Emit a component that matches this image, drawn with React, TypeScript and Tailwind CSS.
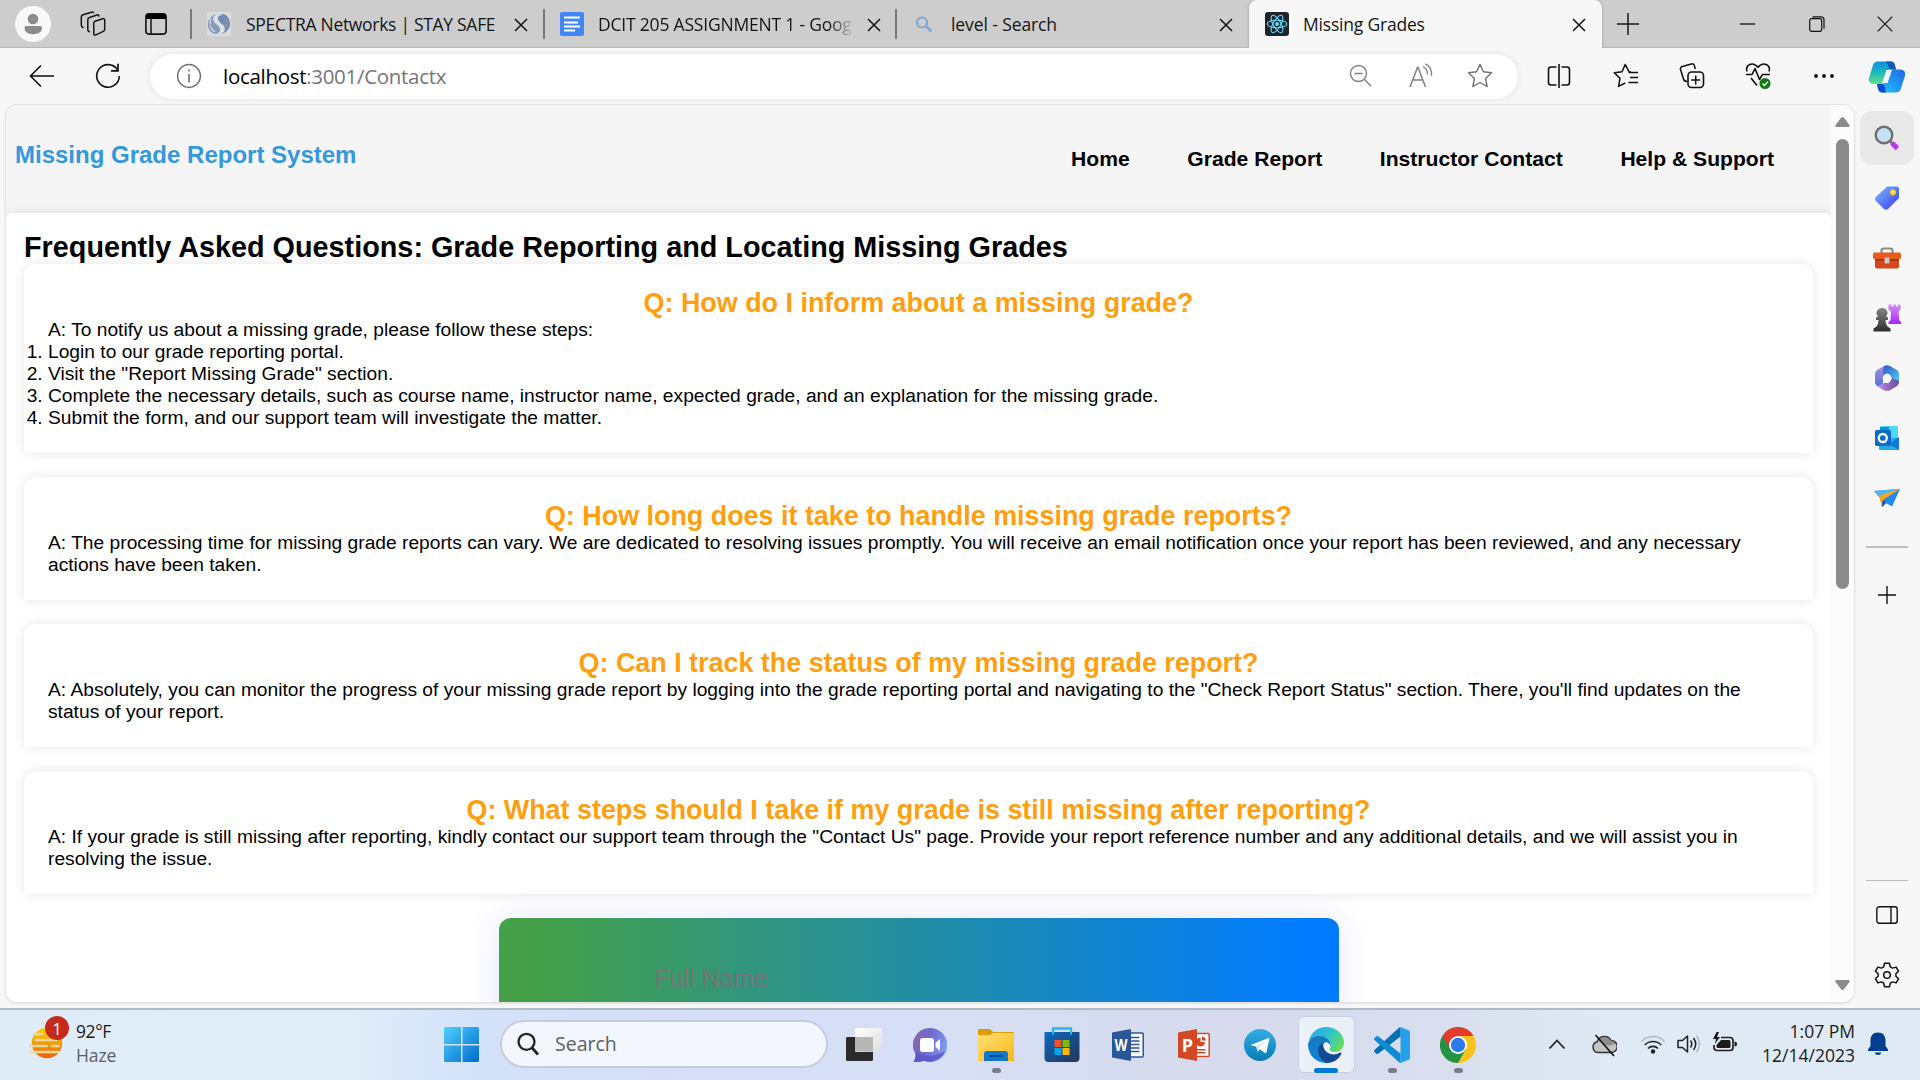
import React from "react";

type SvgProps = { w: number; h: number; className?: string; children: React.ReactNode };

function Svg({ w, h, className = "", children }: SvgProps) {
  return (
    <svg width={w} height={h} viewBox={`0 0 ${w} ${h}`} fill="none" className={`block shrink-0 ${className}`}>
      {children}
    </svg>
  );
}

const ui = "font-['Open_Sans','Noto_Sans',sans-serif]";

function TabClose() {
  return (
    <Svg w={14} h={14} className="mt-0.5">
      <path d="M1 1L13 13M13 1L1 13" stroke="#111" strokeWidth="1.5" />
    </Svg>
  );
}

function TabSeparator({ className }: { className: string }) {
  return <div className={`h-[30px] w-[2px] shrink-0 bg-[#7b7b7b] ${className}`} />;
}

function TabBar() {
  return (
    <div className="flex h-12 shrink-0 items-center bg-[#cdcdcd] text-[17.5px] text-[#151515] shadow-[inset_0_-1px_0_#b9b9b9]">
      <Svg w={36} h={36} className="ml-[15px]">
        <circle cx="18" cy="18" r="18" fill="#f8f8f8" />
        <circle cx="18" cy="13" r="5.3" fill="#8b8b8b" />
        <path d="M11 20h14q2 0 2 2c0 4-4 6.200-9 6.200S9.500 26 9.500 22q0-2 1.500-2z" fill="#8b8b8b" />
      </Svg>
      <Svg w={26} h={26} className="ml-[29px]">
        <g stroke="#161616" strokeWidth="1.500" strokeLinejoin="round" strokeLinecap="round">
          <path d="M14.500 10.500l8-2.800q2.200-.5 2.200 1.500v9q0 1.500-1.500 2.200l-7.200 3.500q-2.200.8-2.200-1.500V12.200q0-1.200.7-1.700z" />
          <path d="M19 5q-.5-1.500-2-1L9.500 6.500Q7.800 7 7.800 8.700v10q0 1.500 1.500 2" />
          <path d="M13.500 1.700Q13 .8 11.500 1.200L3 3.800Q1.300 4.300 1.300 6v8q0 1.800 1.700 2.500" />
        </g>
      </Svg>
      <Svg w={22} h={22} className="ml-[39px]">
        <rect x=".9" y=".9" width="20.200" height="20.200" rx="3" stroke="#111" strokeWidth="1.600" />
        <path d="M1 6V3.500Q1 1 3.500 1h15Q21 1 21 3.500V6z" fill="#000" />
        <path d="M6 6v15" stroke="#111" strokeWidth="1.500" />
      </Svg>
      <TabSeparator className="ml-[23px]" />
      <Svg w={24} h={24} className="ml-[15px]">
        <rect width="24" height="24" fill="#dcdcdc" />
        <path d="M15 2C8 1 5 5 6.500 9c1 3 6 4 6.500 8 .3 3-2 5-5 5C3 21 .8 16 1 12 1.200 6 6 1 15 2z" fill="#7f9dc0" />
        <path d="M9 22c7 1 10-3 8.500-7-1-3-6-4-6.500-8C10.700 4 13 2 16 2c5 1 7.200 6 7 10-.2 6-5 11-14 10z" fill="#6f8db2" />
        <path d="M15 3C10 2 7 5 9 8.500c1.500 2.500 7 4 6.500 9-.3 2-2 4-5 4.500M4 6c-2 5-1 11 4 14" stroke="#dce5ed" strokeWidth="1.100" />
        <path d="M19 8l2 2M18 13l3 1M4 12l1 3" stroke="#d9826f" strokeWidth="1.600" />
      </Svg>
      <span className="ml-[15px] w-[268px] whitespace-nowrap tracking-[-0.3px]">SPECTRA Networks | STAY SAFE</span>
      <TabClose />
      <TabSeparator className="ml-[15px]" />
      <Svg w={24} h={24} className="ml-[15px]">
        <rect width="24" height="24" rx="2" fill="#4285f4" />
        <path d="M4 5.500h16M4 10.500h14M4 14.500h16M4 18.500h11" stroke="#fff" strokeWidth="2.200" />
      </Svg>
      <span className="ml-[14px] w-[256px] overflow-hidden whitespace-nowrap tracking-[-0.2px] [mask-image:linear-gradient(90deg,#000_90%,transparent)]">
        DCIT 205 ASSIGNMENT 1 - Goog
      </span>
      <span className="ml-[13px]">
        <TabClose />
      </span>
      <TabSeparator className="ml-[14px]" />
      <Svg w={24} h={24} className="ml-[15px]">
        <circle cx="10" cy="10.500" r="5" stroke="#7fa9d2" strokeWidth="2.200" />
        <path d="M13.500 14l6 5.500" stroke="#7fa9d2" strokeWidth="2.600" />
      </Svg>
      <span className="ml-[15px] w-[268px] whitespace-nowrap tracking-[-0.1px]">level - Search</span>
      <TabClose />
      <div className="ml-4 flex h-12 w-[353px] shrink-0 items-center rounded-t-lg bg-[#f7f7f7] pl-4 shadow-[0_0_3px_rgba(0,0,0,0.25)] [clip-path:inset(-3px_-4px_0_-4px)]">
        <Svg w={24} h={24}>
          <rect width="24" height="24" rx="3" fill="#20232a" />
          <g stroke="#61dafb" strokeWidth="1.100">
            <ellipse cx="12" cy="12" rx="9.800" ry="3.800" />
            <ellipse cx="12" cy="12" rx="9.800" ry="3.800" transform="rotate(60 12 12)" />
            <ellipse cx="12" cy="12" rx="9.800" ry="3.800" transform="rotate(120 12 12)" />
          </g>
          <circle cx="12" cy="12" r="2" fill="#61dafb" />
        </Svg>
        <span className="ml-[14px] w-[269px] whitespace-nowrap tracking-[-0.2px]">Missing Grades</span>
        <TabClose />
      </div>
      <Svg w={22} h={22} className="ml-[15px]">
        <path d="M11 0v22M0 11h22" stroke="#1a1a1a" strokeWidth="1.500" />
      </Svg>
      <Svg w={16} h={16} className="ml-[101px]">
        <path d="M0 8h15" stroke="#111" strokeWidth="1.300" />
      </Svg>
      <Svg w={16} h={16} className="ml-[53px]">
        <rect x=".7" y="2.700" width="12" height="12.600" rx="2" stroke="#111" strokeWidth="1.200" />
        <path d="M3.500.8H12q3 0 3 3v9" stroke="#111" strokeWidth="1.200" />
      </Svg>
      <Svg w={16} h={16} className="ml-[52px]">
        <path d="M.7.7l14.600 14.600M15.300.7L.7 15.300" stroke="#111" strokeWidth="1.200" />
      </Svg>
    </div>
  );
}

function Toolbar() {
  return (
    <div className="flex h-[56px] shrink-0 items-center bg-[#f7f7f7]">
      <Svg w={26} h={24} className="ml-[29px]">
        <path d="M1.500 12H25M12 1.500L1.500 12 12 22.500" stroke="#111" strokeWidth="1.600" />
      </Svg>
      <Svg w={26} h={26} className="ml-10">
        <path d="M22.300 6.500A11.300 11.300 0 1 0 24.300 13" stroke="#111" strokeWidth="1.600" />
        <path d="M23 .8V7.800h-7" stroke="#111" strokeWidth="1.700" />
      </Svg>
      <div className="ml-[29px] flex h-[45px] w-[1368px] shrink-0 items-center rounded-full bg-white shadow-[0_0_6px_rgba(0,0,0,0.09)]">
        <Svg w={26} h={26} className="ml-[26px]">
          <circle cx="13" cy="13" r="11.400" stroke="#707070" strokeWidth="1.500" />
          <path d="M13 11v8.500M13 6.500v2" stroke="#707070" strokeWidth="1.600" />
        </Svg>
        <span className="ml-[21px] w-[1126px] whitespace-nowrap text-[20.500px] tracking-[-0.3px] text-[#767676]">
          <span className="text-black">localhost</span>:3001/Contactx
        </span>
        <Svg w={24} h={24}>
          <g stroke="#808080" strokeWidth="1.400">
            <circle cx="9.500" cy="9.500" r="8" />
            <path d="M15.200 15.200l7 7M5.500 9.500h8" />
          </g>
        </Svg>
        <Svg w={28} h={26} className="ml-[36px]">
          <path d="M1 24L8.500 4.500h.6L16.500 24M3.800 17h10" stroke="#808080" strokeWidth="1.500" />
          <path d="M14 3.500c3 1.500 4.500 4.500 4.500 8M16.500.8c4 2 6.500 6.500 6 12" stroke="#808080" strokeWidth="1.300" />
        </Svg>
        <Svg w={26} h={26} className="ml-[30px]">
          <path d="M13 1.500l3.500 7.300 8 1-5.900 5.600 1.500 8.100-7.100-4-7.100 4 1.500-8.100L1.500 9.800l8-1z" stroke="#707070" strokeWidth="1.400" strokeLinejoin="round" />
        </Svg>
      </div>
      <Svg w={24} h={24} className="ml-[29px]">
        <path d="M9.500 3H4Q1.500 3 1.500 5.500v13Q1.500 21 4 21h5.500M14.500 3H20q2.500 0 2.500 2.500v13Q22.500 21 20 21h-5.500M12 0v24" stroke="#111" strokeWidth="1.600" />
      </Svg>
      <Svg w={26} h={26} className="ml-[42px]">
        <path d="M18 9l-2-.3L12.200 1.500 9 8.800l-7.700 1 5.700 5.600-1.500 8 6.700-3.400M15.500 9.500H25M17 14.500h8M15.500 19.500H25" stroke="#111" strokeWidth="1.500" strokeLinejoin="round" />
      </Svg>
      <Svg w={26} h={26} className="ml-[40px]">
        <rect x="9" y="9" width="15.500" height="15.500" rx="3.500" stroke="#111" strokeWidth="1.600" />
        <path d="M16.700 12.500v9M12.200 17h9M8 18.500q-3-.2-3.500-2.500L1.500 6.500Q1 4.200 3.300 3.500l9-2.500q2.500-.7 3.200 2l.8 3" stroke="#111" strokeWidth="1.500" />
      </Svg>
      <Svg w={28} h={28} className="ml-[40px]">
        <path d="M2 9.500C.5 5 3.500 2 7.300 2c2.500 0 4.200 1.500 5.700 3.300C14.500 3.500 16.200 2 18.700 2c3.800 0 6.800 3 5.300 7.500M6 16l6 7.500M1 12.500h6l3-6 4.500 11 3-5H25" stroke="#111" strokeWidth="1.600" strokeLinejoin="round" />
        <circle cx="20" cy="21.500" r="5.500" fill="#107c10" />
        <path d="M17.500 21.500l2 2 3.300-3.700" stroke="#fff" strokeWidth="1.500" />
      </Svg>
      <Svg w={22} h={6} className="ml-[40px]">
        <circle cx="3" cy="3" r="1.900" fill="#111" />
        <circle cx="11" cy="3" r="1.900" fill="#111" />
        <circle cx="19" cy="3" r="1.900" fill="#111" />
      </Svg>
      <Svg w={38} h={34} className="mt-[2px] ml-[33px]">
        <defs>
          <linearGradient id="cpA" x1="0" y1="0" x2="0" y2="1">
            <stop offset="0" stopColor="#0c8fe0" />
            <stop offset=".45" stopColor="#1ab7bf" />
            <stop offset="1" stopColor="#63e08a" />
          </linearGradient>
          <linearGradient id="cpB" x1="0" y1="1" x2="1" y2="0">
            <stop offset="0" stopColor="#20c8ff" />
            <stop offset="1" stopColor="#2168e0" />
          </linearGradient>
        </defs>
        <path d="M10 1.500h13q3 0 4 4l1 4h-7l-4 12q-1 2.500-4 2.500H6q-6 0-5-6L5 5q1-3.500 5-3.500z" fill="url(#cpA)" />
        <path d="M18 1.500h5q3 0 4 4l1 4h-5q-2 0-3-4z" fill="#1259b5" />
        <path d="M28 32.500H14q-3 0-4-4L9 24h6l5-12q1-2.500 4-2.500h8q6 0 5 6l-4 13q-1 4-5 4z" fill="url(#cpB)" />
        <path d="M18 32.500h-4q-3 0-4-4L9 24h5q2 0 3 4z" fill="#0f4cd0" />
        <path d="M18.500 10h5.500l-4.500 13H14z" fill="#f7f7f7" />
      </Svg>
    </div>
  );
}

const navItems = ["Home", "Grade Report", "Instructor Contact", "Help & Support"];

function SiteHeader() {
  return (
    <header className="flex h-[108px] shrink-0 justify-between pl-[9px] pr-[57px]">
      <div className="pt-9 text-2xl leading-7 font-bold text-[#3498db]">Missing Grade Report System</div>
      <nav className="flex gap-[57.6px] pt-[42px] text-[21.120px] leading-6 font-bold text-black">
        {navItems.map((item) => (
          <a key={item}>{item}</a>
        ))}
      </nav>
    </header>
  );
}

function FaqCard({ question, children }: { question: string; children: React.ReactNode }) {
  return (
    <section className="mb-6 rounded-t-xl bg-white p-6 text-[19.200px] leading-[22px] tracking-[0.008px] text-black shadow-[0_0_12px_rgba(0,0,0,0.1)]">
      <h3 className="text-center text-[26.880px] leading-[31px] font-bold text-[#ff9f0f]">{question}</h3>
      {children}
    </section>
  );
}

function Faq() {
  return (
    <main className="h-[1200px] shrink-0 rounded-t-md bg-white px-[18px] pt-[18px] shadow-[0_0_12px_rgba(0,0,0,0.1)]">
      <h2 className="text-[28.800px] leading-[33px] font-bold text-black">
        Frequently Asked Questions: Grade Reporting and Locating Missing Grades
      </h2>
      <FaqCard question="Q: How do I inform about a missing grade?">
        <p>A: To notify us about a missing grade, please follow these steps:</p>
        <ol className="list-decimal">
          <li>Login to our grade reporting portal.</li>
          <li>Visit the "Report Missing Grade" section.</li>
          <li>Complete the necessary details, such as course name, instructor name, expected grade, and an explanation for the missing grade.</li>
          <li>Submit the form, and our support team will investigate the matter.</li>
        </ol>
      </FaqCard>
      <FaqCard question="Q: How long does it take to handle missing grade reports?">
        <p>
          A: The processing time for missing grade reports can vary. We are dedicated to resolving issues promptly. You will receive an email
          notification once your report has been reviewed, and any necessary actions have been taken.
        </p>
      </FaqCard>
      <FaqCard question="Q: Can I track the status of my missing grade report?">
        <p>
          A: Absolutely, you can monitor the progress of your missing grade report by logging into the grade reporting portal and navigating to the
          "Check Report Status" section. There, you'll find updates on the status of your report.
        </p>
      </FaqCard>
      <FaqCard question="Q: What steps should I take if my grade is still missing after reporting?">
        <p>
          A: If your grade is still missing after reporting, kindly contact our support team through the "Contact Us" page. Provide your report
          reference number and any additional details, and we will assist you in resolving the issue.
        </p>
      </FaqCard>
      <form className="mx-auto h-[600px] w-[840px] rounded-xl bg-[linear-gradient(90deg,#45a049_4%,#007bff_96%)] pt-[46px] pl-[156px] text-[24.960px] leading-[29px] text-[#757575] shadow-[0_0_36px_rgba(0,0,255,0.1)]">
        Full Name
      </form>
    </main>
  );
}

function Scrollbar() {
  return (
    <div className="flex w-[23px] shrink-0 flex-col items-center bg-[#fcfcfc] pt-3 pb-3">
      <Svg w={15} h={10}>
        <path d="M7.500 0q1 0 1.600 1L14.500 8q.6 2-1 2h-12q-1.600 0-1-2L5.900 1q.6-1 1.600-1z" fill="#8b8b8b" />
      </Svg>
      <div className="mt-3 h-[450px] w-[13px] rounded-full bg-[#8b8b8b]" />
      <Svg w={15} h={10} className="mt-auto">
        <path d="M7.500 10q1 0 1.600-1L14.500 2q.6-2-1-2h-12q-1.600 0-1 2l5.400 7q.6 1 1.600 1z" fill="#8b8b8b" />
      </Svg>
    </div>
  );
}

function Slot({ children }: { children: React.ReactNode }) {
  return <div className="flex h-[60px] w-full shrink-0 items-center justify-center">{children}</div>;
}

function EdgeSidebar() {
  return (
    <aside className="flex w-[63px] shrink-0 flex-col items-center pt-[4px]">
      <Slot>
        <div className="flex size-[54px] items-center justify-center rounded-xl bg-[#e9e9e9]">
          <Svg w={26} h={26}>
            <circle cx="10" cy="10" r="8.300" fill="#c3e2f6" stroke="#6e6e6e" strokeWidth="2.400" />
            <path d="M15.500 15.500l3 3" stroke="#777" strokeWidth="3" />
            <path d="M18 18l5.500 5.500" stroke="#b93af5" strokeWidth="5" />
          </Svg>
        </div>
      </Slot>
      <Slot>
        <Svg w={24} h={24}>
          <defs>
            <linearGradient id="tag" x1="0" y1="0" x2="1" y2="1">
              <stop offset="0" stopColor="#7cc0ff" />
              <stop offset="1" stopColor="#3a35f2" />
            </linearGradient>
          </defs>
          <path d="M12 .5h9.500q2.500 0 2.500 2.500v9L13 23q-2 1.500-4 0L.8 15q-1.500-2 0-4z" fill="url(#tag)" />
          <circle cx="18" cy="6.300" r="2.200" stroke="#f7c81c" strokeWidth="1.800" fill="#fff6c5" />
        </Svg>
      </Slot>
      <Slot>
        <Svg w={28} h={22}>
          <path d="M8.500 7V3.500Q8.500 1.500 11 1.500h6q2.500 0 2.500 2V7" stroke="#8c8c8c" strokeWidth="2.200" />
          <path d="M2 10h24v9.500q0 2-2 2H4q-2 0-2-2z" fill="#d5461b" />
          <rect y="5.500" width="28" height="6.500" rx="1.500" fill="#e95a1c" />
          <path d="M2 12h24v1.500H2z" fill="#9d2c10" />
          <rect x="11.500" y="10.500" width="5" height="6" rx="1" fill="#c9c9c9" />
        </Svg>
      </Slot>
      <Slot>
        <Svg w={28} h={28}>
          <defs>
            <linearGradient id="rook" x1="0" y1="0" x2="0" y2="1">
              <stop stopColor="#d98bfa" />
              <stop offset="1" stopColor="#a229f5" />
            </linearGradient>
            <linearGradient id="pawn" x1="0" y1="0" x2="0" y2="1">
              <stop stopColor="#858585" />
              <stop offset="1" stopColor="#2d2d2d" />
            </linearGradient>
          </defs>
          <path d="M15.500.5h3v2h2v-2h2.500v2h2v-2h2.500v5l-2 2 .7 8.500 1.800 2v2H15.500v-2l2-2 .5-8.500-2.500-2z" fill="url(#rook)" />
          <path d="M9 4a5 5 0 0 1 4 8.500l2 1v2.500h-2.500q0 4 2 6.500l3 2v3H.5v-3l3-2q2-2.500 2-6.500H3v-2.500l2-1A5 5 0 0 1 9 4z" fill="url(#pawn)" />
        </Svg>
      </Slot>
      <Slot>
        <Svg w={24} h={26}>
          <defs>
            <linearGradient id="m1" x1="0" y1="0" x2="0" y2="1">
              <stop stopColor="#b18be8" />
              <stop offset="1" stopColor="#4a78d8" />
            </linearGradient>
            <linearGradient id="m2" x1="0" y1="0" x2="1" y2="1">
              <stop stopColor="#2a5fc4" />
              <stop offset="1" stopColor="#4fd0f5" />
            </linearGradient>
            <linearGradient id="m3" x1="0" y1="0" x2="1" y2="0">
              <stop stopColor="#c08be6" />
              <stop offset="1" stopColor="#6c4a9c" />
            </linearGradient>
          </defs>
          <path d="M9 1L2 5Q0 6.500 0 9v8q0 2.500 2 4l1 .5 5-3V6q0-3 1-5z" fill="url(#m1)" />
          <path d="M9 1q3-1.500 6 0l7 4q2 1.500 2 4v9l-8-5.500-4-4-4 3V6q0-3 1-5z" fill="url(#m2)" />
          <path d="M24 16v1q0 2.500-2 4l-7 4.200q-3 1.300-6 0L2 21q5-1 7-3h5l3-5z" fill="url(#m3)" />
          <circle cx="12" cy="13" r="4.300" fill="#f7f7f7" />
        </Svg>
      </Slot>
      <Slot>
        <Svg w={24} h={24}>
          <rect x="5" y="0" width="18" height="15" rx="1" fill="#50d9ff" />
          <path d="M5 1h9v8H5z" fill="#1490df" />
          <path d="M4 12h20v11q0 1-1 1H5q-1 0-1-1z" fill="#28a8ea" />
          <path d="M24 11v13l-10-6z" fill="#0f78d4" />
          <rect y="4" width="16" height="16" rx="1.500" fill="#0a6cc6" />
          <circle cx="7.800" cy="12" r="4" stroke="#fff" strokeWidth="2.300" />
        </Svg>
      </Slot>
      <Slot>
        <Svg w={26} h={20}>
          <path d="M0 3L26 1l-8 17.500-6-3.500L8 19 6 10z" fill="#2389ec" />
          <path d="M0 3L26 .8 6 9z" fill="#51b5f5" />
          <path d="M5 7.500L26 1 9 12l-1 7z" fill="#f3a51c" />
          <path d="M9 12l3 3-4 4z" fill="#174f9f" />
        </Svg>
      </Slot>
      <div className="mt-[18px] h-[2px] w-[42px] bg-[#bfbfbf]" />
      <Svg w={18} h={18} className="mt-[38px]">
        <path d="M9 0v18M0 9h18" stroke="#111" strokeWidth="1.400" />
      </Svg>
      <div className="mt-auto h-px w-[42px] bg-[#bcbcbc]" />
      <Svg w={22} h={18} className="mt-[25px]">
        <rect x=".8" y=".8" width="20.400" height="16.400" rx="2.500" stroke="#111" strokeWidth="1.400" />
        <path d="M15 1v16" stroke="#111" strokeWidth="1.400" />
      </Svg>
      <Svg w={26} h={26} className="mt-[38px] mb-5">
        <path
          d="M10.600 1.200h4.800l.9 3.600 2.300 1.300 3.500-1 2.400 4.100-2.600 2.600v2.400l2.600 2.600-2.400 4.100-3.500-1-2.300 1.300-.9 3.600h-4.800l-.9-3.600-2.300-1.300-3.500 1-2.400-4.100 2.600-2.600v-2.400L1.500 9.200l2.400-4.100 3.500 1 2.300-1.300z"
          stroke="#111"
          strokeWidth="1.500"
          strokeLinejoin="round"
        />
        <circle cx="13" cy="13" r="3.300" stroke="#111" strokeWidth="1.500" />
      </Svg>
    </aside>
  );
}

function AppSlot({ mark = "none", children }: { mark?: "none" | "dot" | "active"; children: React.ReactNode }) {
  return (
    <div className="flex h-full w-[66px] shrink-0 justify-center pt-[6px]">
      <div
        className={
          mark === "active"
            ? "relative flex h-[57px] w-[57px] items-center justify-center rounded-md border border-[#c9cfdf] bg-[#ebeff8]"
            : "relative flex h-[57px] w-[57px] items-center justify-center"
        }
      >
        {children}
        {mark === "dot" && <div className="absolute bottom-0 h-[5px] w-[9px] rounded-full bg-[#7b7e87]" />}
        {mark === "active" && <div className="absolute -bottom-px h-[5px] w-6 rounded-full bg-[#0078d4]" />}
      </div>
    </div>
  );
}

function TaskbarApps() {
  return (
    <>
      <AppSlot>
        <Svg w={36} h={36}>
          <defs>
            <linearGradient id="tvw" x1="0" y1="0" x2="1" y2="1">
              <stop stopColor="#fff" />
              <stop offset="1" stopColor="#dedede" />
            </linearGradient>
          </defs>
          <rect x="0" y="10" width="27" height="24" rx="1.500" fill="#2b2b2b" />
          <rect x="9" y="1" width="27" height="24" rx="1.500" fill="url(#tvw)" />
          <path d="M9 10h18v14.500H9z" fill="#b7b7b7" />
        </Svg>
      </AppSlot>
      <AppSlot>
        <Svg w={34} h={34}>
          <defs>
            <linearGradient id="chat" x1="0" y1=".1" x2="1" y2=".4">
              <stop stopColor="#8c66b0" />
              <stop offset=".5" stopColor="#6d6acb" />
              <stop offset="1" stopColor="#7f9af0" />
            </linearGradient>
          </defs>
          <path d="M17 0a17 17 0 1 1-6 32.800Q6 34.500.5 34q2.500-4 2-8A17 17 0 0 1 17 0z" fill="url(#chat)" />
          <path d="M3 24q14 8 29-1a17 17 0 0 1-21 9.800Q6 34.500.5 34q2.500-4 2.500-10z" fill="#5a54c8" opacity=".8" />
          <rect x="7" y="10" width="14" height="14" rx="2.500" fill="#fff" />
          <path d="M22.500 15l4.500-4v12l-4.500-4z" fill="#fff" />
        </Svg>
      </AppSlot>
      <AppSlot mark="dot">
        <Svg w={36} h={34}>
          <defs>
            <linearGradient id="fold" x1="0" y1="0" x2="1" y2="1">
              <stop stopColor="#ffe07a" />
              <stop offset="1" stopColor="#fbb816" />
            </linearGradient>
          </defs>
          <path d="M0 2q0-1 1-1h11l3 3h20q1 0 1 1v6H0z" fill="#dd9b05" />
          <path d="M0 7h12l3-2h21v28H0z" fill="url(#fold)" />
          <path d="M6 33v-7q0-3 3-3h18q3 0 3 3v7z" fill="#0f78ca" />
          <path d="M11.500 28h13" stroke="#084f96" strokeWidth="2" />
        </Svg>
      </AppSlot>
      <AppSlot>
        <Svg w={36} h={36}>
          <defs>
            <linearGradient id="store" x1="0" y1="0" x2="1" y2="1">
              <stop stopColor="#0a6ac4" />
              <stop offset="1" stopColor="#253457" />
            </linearGradient>
          </defs>
          <path d="M9 8V1.500h18V8" stroke="#22b9ef" strokeWidth="2.200" />
          <path d="M.5 5h35v26q0 4-4 4h-27q-4 0-4-4z" fill="url(#store)" />
          <path d="M9 7.500V1.500h18v6" stroke="#22b9ef" strokeWidth="2" />
          <path d="M10.500 13h7v7h-7z" fill="#f25022" />
          <path d="M18.500 13h7v7h-7z" fill="#7fba00" />
          <path d="M10.500 21h7v7h-7z" fill="#00a4ef" />
          <path d="M18.500 21h7v7h-7z" fill="#ffb900" />
        </Svg>
      </AppSlot>
      <AppSlot>
        <Svg w={32} h={32}>
          <rect x="15" y="4" width="16.200" height="24" rx="1" fill="#fff" stroke="#2b579a" strokeWidth="1.500" />
          <path d="M18 8.500h9.500M18 12h9.500M18 15.500h9.500M18 19h9.500M18 22.500h9.500" stroke="#2b579a" strokeWidth="1.400" />
          <path d="M0 3.500L19 0v32L0 28.500z" fill="#2b579a" />
          <text x="9" y="22" textAnchor="middle" fontSize="15.500" fontWeight="700" fill="#fff" fontFamily="Open Sans" textLength="13" lengthAdjust="spacingAndGlyphs">
            W
          </text>
        </Svg>
      </AppSlot>
      <AppSlot>
        <Svg w={32} h={32}>
          <rect x="15" y="4.500" width="16.200" height="23" rx="1" fill="#fff" stroke="#d24726" strokeWidth="1.500" />
          <path d="M22.500 8.500v4.500h4.500a4.500 4.500 0 1 1-4.500-4.500z" fill="#d24726" />
          <path d="M24 7.500a4.500 4.500 0 0 1 4 4h-4zM19 20h8.500v1.500H19zM19 23h8.500v1.500H19z" fill="#d24726" />
          <path d="M0 3.500L19 0v32L0 28.500z" fill="#d24726" />
          <text x="9.500" y="22.500" textAnchor="middle" fontSize="18" fontWeight="700" fill="#fff" fontFamily="Open Sans">
            P
          </text>
        </Svg>
      </AppSlot>
      <AppSlot>
        <Svg w={32} h={32}>
          <defs>
            <linearGradient id="tg" x1="0" y1="0" x2="0" y2="1">
              <stop stopColor="#33aee3" />
              <stop offset="1" stopColor="#087cb8" />
            </linearGradient>
          </defs>
          <circle cx="16" cy="16" r="16" fill="url(#tg)" />
          <path d="M6.500 16L24.500 9q1-.3.800 1L22.500 23q-.4 1.600-1.800.7L16 20.300l-2.600 2.400-1-5z" fill="#fff" />
          <path d="M12.500 18l8.500-6-6.500 7-1 3.500z" fill="#c3deec" />
        </Svg>
      </AppSlot>
      <AppSlot mark="active">
        <Svg w={36} h={36}>
          <defs>
            <linearGradient id="ed1" x1="0" y1=".3" x2="1" y2=".7">
              <stop stopColor="#2aa9e8" />
              <stop offset=".5" stopColor="#2ec3cf" />
              <stop offset="1" stopColor="#6be052" />
            </linearGradient>
            <linearGradient id="ed2" x1="0" y1="0" x2="0" y2="1">
              <stop stopColor="#1a78b9" />
              <stop offset="1" stopColor="#0a84e0" />
            </linearGradient>
          </defs>
          <path d="M.5 15C3 5 10 0 18 0c10 0 18 7 18 15.500C36 22 32 25 27 25c-4 0-6-1.500-5-3.500 1.500-2.500 1-8-6-10C9.500 10 3 11 .5 15z" fill="url(#ed1)" />
          <path d="M.2 16C3 10 9 7.800 14.500 9.500 20 11 23 15 22.500 19 20 12.500 14 15 14 21c0 8 9 13 17.500 8.800C28 34 23 36 18 36 7 36-1 26.500.2 16z" fill="url(#ed2)" />
          <path d="M15.500 15.500C8 18.500 8 30 18.500 36 25 36 31 32 33.300 27c.5-1.300-.8-1.800-2-1C24 30 13.500 25 15.500 15.500z" fill="#114a93" />
        </Svg>
      </AppSlot>
      <AppSlot mark="dot">
        <Svg w={36} h={36}>
          <path d="M26.500 0L35 3.500q1 .5 1 1.500v26q0 1-1 1.500L26.500 36z" fill="#25a0ee" />
          <path d="M26.500 0v9.500L4.500 26.500 2.500 27 .5 25q-1-1 0-2L25 .8z" fill="#0270b5" />
          <path d="M26.500 36v-9.500L4.500 9.500 3 9 .5 11q-1 1 0 2L25 35.200z" fill="#0c8bd2" />
        </Svg>
      </AppSlot>
      <AppSlot mark="dot">
        <Svg w={36} h={36}>
          <circle cx="18" cy="18" r="18" fill="#fcc31a" />
          <path d="M2.400 9A18 18 0 0 0 18 36l8-14-8-4z" fill="#239347" />
          <path d="M2.400 9A18 18 0 0 1 33.600 9H18l-7.800 13.500z" fill="#e33b2e" />
          <path d="M2.400 9l7.800 13.500L18 27 14 34 3 26z" fill="#239347" />
          <circle cx="18" cy="18" r="9" fill="#fff" />
          <circle cx="18" cy="18" r="7.200" fill="#2c7bee" />
        </Svg>
      </AppSlot>
    </>
  );
}

function Taskbar() {
  return (
    <div className="flex h-[72px] shrink-0 items-start border-t-2 border-[#b0bac4] bg-[linear-gradient(90deg,#dfebf6_0%,#e1edf7_18%,#d4e3fa_24%,#d5def5_34%,#d6dff5_48%,#d6daec_64%,#d9dfee_76%,#dfeaf4_84%,#dfeaf4_100%)] text-[#1b1b1b]">
      <div className="relative mt-3 ml-[28px] h-[44px] w-[44px] shrink-0">
        <Svg w={36} h={40}>
          <defs>
            <linearGradient id="sun" x1="0" y1="0" x2="0" y2="1">
              <stop stopColor="#ffd500" />
              <stop offset="1" stopColor="#ea6208" />
            </linearGradient>
          </defs>
          <circle cx="19" cy="21" r="15.300" fill="url(#sun)" />
          <path d="M6 12h8M8 18h20M2 24h17M24 24h7M2 30h29" stroke="#ead9a0" strokeWidth="2.600" strokeLinecap="round" />
        </Svg>
        <div className="absolute top-[-6px] left-[17px] flex size-6 items-center justify-center rounded-full bg-[#c42b1c] text-[17px] leading-none text-white">1</div>
      </div>
      <div className="ml-1 w-[368px] shrink-0 pt-[9px] text-[17.500px] leading-6 tracking-[-0.4px]">
        <div>92°F</div>
        <div className="tracking-[-0.1px] text-[#5b6168]">Haze</div>
      </div>
      <Svg w={36} h={36} className="mt-[17px]">
        <defs>
          <linearGradient id="win" x1="0" y1="0" x2="1" y2="1">
            <stop stopColor="#4fd1ff" />
            <stop offset="1" stopColor="#0169cb" />
          </linearGradient>
        </defs>
        <path d="M1.500 0H17v17H0V1.500Q0 0 1.500 0zM18.500 0h15Q35 0 35 1.500V17H18.500zM0 18.500h17v16.500H1.500Q0 35 0 33.500zM18.500 18.500H35v15q0 1.500-1.500 1.500h-15z" fill="url(#win)" />
      </Svg>
      <div className="mt-[10px] ml-5 flex h-[48px] w-[328px] shrink-0 items-center rounded-full border-2 border-[#c5cde2] bg-[#f3f6fd]">
        <Svg w={24} h={24} className="ml-[14px]">
          <circle cx="10.500" cy="9.800" r="8" stroke="#222" strokeWidth="2.300" />
          <path d="M16 15.800l6 6.700" stroke="#222" strokeWidth="2.800" />
        </Svg>
        <span className="ml-[15px] text-[19.500px] text-[#5c6066]">Search</span>
      </div>
      <div className="flex h-full shrink-0 pl-[3px]">
        <TaskbarApps />
      </div>
      <div className="flex h-[68px] shrink-0 items-center">
        <Svg w={18} h={12} className="ml-[57px]">
          <path d="M1.500 10.500L9 2.500l7.500 8" stroke="#222" strokeWidth="1.800" />
        </Svg>
        <Svg w={26} h={26} className="ml-[25px]">
          <path d="M7 21.500a5.500 5.500 0 0 1-.8-10.800A7.500 7.500 0 0 1 20 9.500a6 6 0 0 1 .5 12z" fill="#c4c4c4" stroke="#333" strokeWidth="1.500" />
          <path d="M7 10l10 5 7-2a7 7 0 0 0-5-4A7.500 7.500 0 0 0 7 10z" fill="#8e8e8e" />
          <path d="M4.500 4l18.500 21" stroke="#111" strokeWidth="1.600" />
        </Svg>
        <Svg w={26} h={24} className="ml-[23px]">
          <path d="M1.500 9.500a16 16 0 0 1 23 0" stroke="#b4bac0" strokeWidth="1.500" />
          <path d="M4.700 13a11.500 11.500 0 0 1 16.600 0M8 16.500a7 7 0 0 1 10 0" stroke="#222" strokeWidth="1.600" />
          <circle cx="13" cy="19.500" r="2.200" fill="#222" />
        </Svg>
        <Svg w={26} h={24} className="ml-[11px]">
          <path d="M1 8.500h4.500L10.500 4v16l-5-4.500H1zM13.500 8.500q2.500 3.500 0 7M16.500 6q4.500 6 0 12" stroke="#222" strokeWidth="1.500" strokeLinejoin="round" />
          <path d="M19.500 3.500q6 8.500 0 17" stroke="#b4bac0" strokeWidth="1.500" />
        </Svg>
        <Svg w={26} h={26} className="ml-[9px]">
          <path d="M9 6.500h9q3 0 3 3v7q0 3-3 3H5q-3 0-3-3V14" stroke="#222" strokeWidth="1.700" />
          <path d="M9 9h8q1.500 0 1.500 1.500v5q0 1.500-1.500 1.500H6q-1.500 0-1.500-1.500V14zM22.500 10.500q2.500 0 2.500 2.500t-2.500 2.500zM4.500 1L1 8h3l-1 5 5-7H5l2-5z" fill="#1b1b1b" />
        </Svg>
        <div className="w-[117px] pb-[2px] text-right text-[17.500px] leading-6 whitespace-nowrap">
          <div>1:07 PM</div>
          <div>12/14/2023</div>
        </div>
        <Svg w={22} h={24} className="ml-[12px]">
          <path d="M11 .5c5 0 7.500 3.500 7.500 8V14l2.500 3.500V19H1v-1.500L3.500 14V8.500c0-4.500 2.500-8 7.500-8zM7.500 20.500h7q-1 2.500-3.500 2.500t-3.500-2.500z" fill="#003e92" />
        </Svg>
      </div>
    </div>
  );
}

export default function App() {
  return (
    <div className={`flex h-[1080px] w-[1920px] flex-col overflow-hidden bg-[#f7f7f7] ${ui}`}>
      <TabBar />
      <Toolbar />
      <div className="flex min-h-0 flex-1">
        <div className="mb-[5px] ml-[5px] flex w-[1850px] shrink-0 overflow-hidden rounded-xl border border-[#e3e3e3] bg-[#f5f5f5] shadow-[0_1px_2px_rgba(0,0,0,0.08)]">
          <div className="flex w-[1825px] shrink-0 flex-col overflow-hidden font-['Liberation_Sans',Arial,sans-serif]">
            <SiteHeader />
            <Faq />
          </div>
          <Scrollbar />
        </div>
        <EdgeSidebar />
      </div>
      <Taskbar />
    </div>
  );
}
